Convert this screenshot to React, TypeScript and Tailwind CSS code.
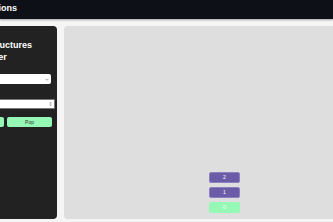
export default function App() {
  return (
    <div className="w-[333px] h-[222px] overflow-hidden bg-[#f5f5f5] font-['Liberation_Sans',Arial,sans-serif]">
      <header className="h-[19px] bg-[#0d1117] flex items-start pt-[3px] shadow-[0_1px_2px_rgba(0,0,0,0.35)]">
        <div className="w-[17px] flex justify-end">
          <h1 className="shrink-0 whitespace-nowrap text-white text-[9px] font-bold leading-[11px]">
            Data Structures Visualizations
          </h1>
        </div>
      </header>
      <main className="flex gap-[7px] -ml-[46px] w-[431px] mt-[7px] h-[193px]">
        <aside className="w-[103px] shrink-0 bg-[#222222] rounded-[4px] px-[5px] pt-[13px] flex flex-col">
          <h2 className="ml-[6px] text-white font-bold text-[9px] leading-[12px]">
            Data Structures Visualizer
          </h2>
          <div className="mt-[11px] h-[10px] w-[92px] bg-white rounded-[2px] flex items-center justify-between pl-[3px] pr-[2px]">
            <span className="text-[5px] leading-[5px] text-black">Stack</span>
            <svg width="4" height="3" viewBox="0 0 4 3">
              <path d="M0.5 0.8 L2 2.3 L3.5 0.8" stroke="#777" strokeWidth="0.7" fill="none" />
            </svg>
          </div>
          <div className="mt-[15px] h-[10px] w-[96px] bg-white rounded-[1px] border border-[#767676] flex items-center justify-between pl-[3px] pr-[2px]">
            <span className="text-[5px] leading-[5px] text-[#777]">Enter value</span>
            <svg width="3" height="6" viewBox="0 0 3 6">
              <path d="M0.3 2.4 L1.5 0.8 L2.7 2.4 Z M0.3 3.6 L1.5 5.2 L2.7 3.6 Z" fill="#999" />
            </svg>
          </div>
          <div className="mt-[8px] w-[93px] grid grid-cols-2 gap-[3px]">
            <button className="h-[10px] bg-[#95f9b5] rounded-[2px] text-[5px] leading-[5px] text-[#333]">Push</button>
            <button className="h-[10px] bg-[#95f9b5] rounded-[2px] text-[5px] leading-[5px] text-[#333]">Pop</button>
          </div>
        </aside>
        <section className="flex-1 bg-[#dedede] rounded-[4px] flex flex-col items-center justify-end gap-[4px] pb-[6px]">
          <div className="w-[31px] h-[11px] bg-[#6c5ca8] rounded-[2px] border border-[#8a7fc0] flex items-center justify-center text-white text-[5px] leading-[5px]">2</div>
          <div className="w-[31px] h-[11px] bg-[#6c5ca8] rounded-[2px] border border-[#8a7fc0] flex items-center justify-center text-white text-[5px] leading-[5px]">1</div>
          <div className="w-[31px] h-[11px] bg-[#95f9b5] rounded-[2px] flex items-center justify-center text-white text-[5px] leading-[5px]">0</div>
        </section>
      </main>
    </div>
  );
}
